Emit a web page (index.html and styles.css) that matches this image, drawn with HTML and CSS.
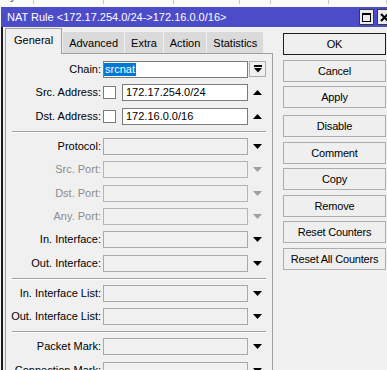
FILE: index.html
```html
<!DOCTYPE html>
<html lang="en">
<head>
  <meta charset="UTF-8" />
  <title>NAT Rule</title>
  <link rel="stylesheet" href="styles.css">
</head>
<body>
  <div class="behind">
    <div class="behind-row">
      <span style="width:35px">Bytes</span>
      <span style="width:72px">Src. Address List</span>
      <span style="width:73px">Connection Mark</span>
      <span style="width:68px">Address List</span>
      <span style="width:32px">In. Int</span>
      <span style="width:60px">7 Protocol</span>
      <span style="width:60px">Src. Port</span>
    </div>
  </div>

  <div class="window">
    <div class="titlebar">
      <span class="title">NAT Rule &lt;172.17.254.0/24-&gt;172.16.0.0/16&gt;</span>
      <span class="cbtn">
        <svg width="9" height="9" viewBox="0 0 9 9"><rect x="0.5" y="0.5" width="8" height="8" fill="none" stroke="#000"/><rect x="0" y="0" width="9" height="2" fill="#000"/></svg>
      </span>
      <span class="cbtn">
        <svg width="9" height="9" viewBox="0 0 9 9"><path d="M1 1 L8 8 M8 1 L1 8" stroke="#000" stroke-width="2"/></svg>
      </span>
    </div>

    <div class="wbody">
      <div class="left">
        <div class="tabs">
          <div class="tab active">General</div>
          <div class="tab">Advanced</div>
          <div class="tab">Extra</div>
          <div class="tab">Action</div>
          <div class="tab">Statistics</div>
        </div>

        <div class="panel">
          <div class="group">
            <div class="row">
              <span class="label">Chain:</span>
              <span class="field filled chain"><span class="selected">srcnat</span></span>
              <span class="ind boxed">
                <svg width="8" height="8" viewBox="0 0 8 8"><rect x="0" y="0" width="8" height="2" fill="#000"/><polygon points="0,3 8,3 4,7.5" fill="#000"/></svg>
              </span>
            </div>
            <div class="row">
              <span class="label">Src. Address:</span>
              <span class="combo"><span class="check"></span><span class="field filled">172.17.254.0/24</span></span>
              <span class="ind"><svg width="9" height="5" viewBox="0 0 9 5"><polygon points="0,5 9,5 4.5,0" fill="#000"/></svg></span>
            </div>
            <div class="row">
              <span class="label">Dst. Address:</span>
              <span class="combo"><span class="check"></span><span class="field filled">172.16.0.0/16</span></span>
              <span class="ind"><svg width="9" height="5" viewBox="0 0 9 5"><polygon points="0,5 9,5 4.5,0" fill="#000"/></svg></span>
            </div>
          </div>

          <div class="sep"></div>

          <div class="group">
            <div class="row">
              <span class="label">Protocol:</span>
              <span class="field"></span>
              <span class="ind"><svg width="9" height="5" viewBox="0 0 9 5"><polygon points="0,0 9,0 4.5,5" fill="#000"/></svg></span>
            </div>
            <div class="row disabled">
              <span class="label">Src. Port:</span>
              <span class="field"></span>
              <span class="ind"><svg width="9" height="5" viewBox="0 0 9 5"><polygon points="0,0 9,0 4.5,5" fill="#a0a0a0"/></svg></span>
            </div>
            <div class="row disabled">
              <span class="label">Dst. Port:</span>
              <span class="field"></span>
              <span class="ind"><svg width="9" height="5" viewBox="0 0 9 5"><polygon points="0,0 9,0 4.5,5" fill="#a0a0a0"/></svg></span>
            </div>
            <div class="row disabled">
              <span class="label">Any. Port:</span>
              <span class="field"></span>
              <span class="ind"><svg width="9" height="5" viewBox="0 0 9 5"><polygon points="0,0 9,0 4.5,5" fill="#a0a0a0"/></svg></span>
            </div>
            <div class="row">
              <span class="label">In. Interface:</span>
              <span class="field"></span>
              <span class="ind"><svg width="9" height="5" viewBox="0 0 9 5"><polygon points="0,0 9,0 4.5,5" fill="#000"/></svg></span>
            </div>
            <div class="row">
              <span class="label">Out. Interface:</span>
              <span class="field"></span>
              <span class="ind"><svg width="9" height="5" viewBox="0 0 9 5"><polygon points="0,0 9,0 4.5,5" fill="#000"/></svg></span>
            </div>
          </div>

          <div class="sep"></div>

          <div class="group">
            <div class="row">
              <span class="label">In. Interface List:</span>
              <span class="field"></span>
              <span class="ind"><svg width="9" height="5" viewBox="0 0 9 5"><polygon points="0,0 9,0 4.5,5" fill="#000"/></svg></span>
            </div>
            <div class="row">
              <span class="label">Out. Interface List:</span>
              <span class="field"></span>
              <span class="ind"><svg width="9" height="5" viewBox="0 0 9 5"><polygon points="0,0 9,0 4.5,5" fill="#000"/></svg></span>
            </div>
          </div>

          <div class="sep"></div>

          <div class="group">
            <div class="row">
              <span class="label">Packet Mark:</span>
              <span class="field"></span>
              <span class="ind"><svg width="9" height="5" viewBox="0 0 9 5"><polygon points="0,0 9,0 4.5,5" fill="#000"/></svg></span>
            </div>
            <div class="row">
              <span class="label">Connection Mark:</span>
              <span class="field"></span>
              <span class="ind"><svg width="9" height="5" viewBox="0 0 9 5"><polygon points="0,0 9,0 4.5,5" fill="#000"/></svg></span>
            </div>
          </div>
        </div>
      </div>

      <div class="actions">
        <button class="btn default">OK</button>
        <button class="btn">Cancel</button>
        <button class="btn">Apply</button>
        <button class="btn spaced">Disable</button>
        <button class="btn">Comment</button>
        <button class="btn">Copy</button>
        <button class="btn">Remove</button>
        <button class="btn">Reset Counters</button>
        <button class="btn">Reset All Counters</button>
      </div>
    </div>
  </div>
</body>
</html>
```

FILE: styles.css
```css
* {
  box-sizing: border-box;
}
html, body {
  margin: 0;
  height: 370px;
  overflow: hidden;
}
body {
  background: #f7f7f7;
  font-family: 'Liberation Sans', Arial, sans-serif;
  font-size: 11px;
  color: #000;
}

/* list window peeking out behind the dialog */
.behind {
  height: 7px;
  overflow: hidden;
  background: #fbfbfb;
}
.behind-row {
  display: flex;
  margin-top: -11px;
  height: 15px;
  white-space: nowrap;
}
.behind-row span {
  overflow: hidden;
  line-height: 15px;
  padding-left: 3px;
  border-right: 1px solid #c8c8c8;
  color: #333;
}

.window {
  margin-left: 1px;
  width: 393px;
}
.titlebar {
  height: 20px;
  background: #4c4cc9;
  color: #fff;
  display: flex;
  align-items: center;
  padding: 0 2px 0 6px;
}
.title {
  flex: 1;
  white-space: nowrap;
}
.cbtn {
  width: 15px;
  height: 16px;
  margin-left: 3px;
  background: #ececec;
  border: 1px solid #3a3a3a;
  display: flex;
  align-items: center;
  justify-content: center;
}

.wbody {
  display: flex;
  height: 343px;
  background: #f0f0f0;
  border-left: 2px solid #1c1c1c;
  padding-left: 2px;
}
.left {
  width: 268px;
  display: flex;
  flex-direction: column;
}

.tabs {
  display: flex;
  align-items: flex-end;
  gap: 1px;
  height: 25px;
  margin-top: 1px;
}
.tab {
  height: 21px;
  padding: 0 6px;
  background: #dadada;
  display: flex;
  align-items: center;
  white-space: nowrap;
}
.tab.active {
  position: relative;
  z-index: 1;
  height: 26px;
  margin-bottom: -1px;
  padding: 0 8px 4px 8px;
  background: #f0f0f0;
  border: 1px solid #a0a0a0;
  border-bottom: none;
}

.panel {
  flex: 1;
  border: 1px solid #a0a0a0;
  border-bottom: none;
  padding-top: 7px;
}
.group {
  display: flex;
  flex-direction: column;
  gap: 6.4px;
}
.row {
  display: grid;
  grid-template-columns: 97px 145px 18px;
  height: 17px;
}
.label {
  text-align: right;
  padding-right: 2px;
  line-height: 17px;
  white-space: nowrap;
}
.field {
  height: 17px;
  border: 1px solid #a8a8a8;
  background: #f0f0f0;
}
.field.filled {
  background: #fff;
  border-color: #7a7a7a;
  padding-left: 3px;
  line-height: 15px;
  white-space: nowrap;
}
.field.chain {
  padding-left: 0;
}
.selected {
  display: inline-block;
  line-height: 13px;
  padding: 0 1px;
  margin-top: 1px;
  vertical-align: top;
  background: #0078d7;
  color: #fff;
}
.combo {
  display: flex;
  align-items: center;
  gap: 6px;
}
.combo .field {
  flex: 1;
}
.check {
  width: 13px;
  height: 13px;
  border: 1px solid #7a7a7a;
  background: #fff;
}
.ind {
  display: flex;
  align-items: center;
  justify-content: center;
}
.ind.boxed {
  margin-left: 1px;
  height: 16px;
  border: 1px solid #adadad;
  background: #f0f0f0;
}
.row.disabled .label {
  color: #8c8c8c;
}
.row.disabled .field {
  border-color: #b4b4b4;
}

.sep {
  height: 2px;
  margin: 6px 6px 5px;
  border-top: 1px solid #a0a0a0;
  border-bottom: 1px solid #fff;
}

.actions {
  display: flex;
  flex-direction: column;
  gap: 4.5px;
  width: 103px;
  margin-left: 10px;
  padding-top: 6px;
}
.btn {
  height: 22px;
  padding: 0;
  border: 1px solid #adadad;
  background: #efefef;
  color: #000;
  font-family: 'Liberation Sans', Arial, sans-serif;
  font-size: 11px;
  letter-spacing: -0.2px;
  white-space: nowrap;
}
.btn.default {
  border-color: #1e1e1e;
}
.btn.spaced {
  margin-top: 2.5px;
}
```
